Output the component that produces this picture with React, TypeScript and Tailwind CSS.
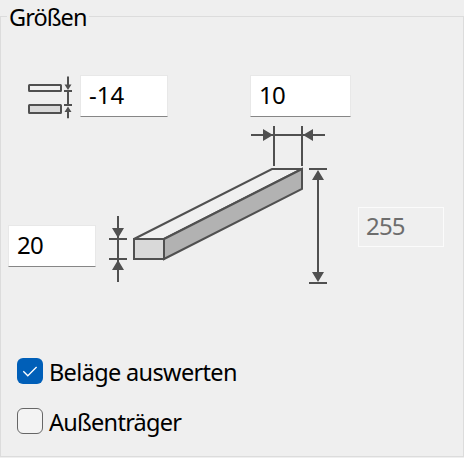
import React, { useState } from 'react';
import clsx from 'clsx';

interface SizeFieldProps {
  label: string;
  value: string;
  onChange?: (value: string) => void;
  disabled?: boolean;
  className?: string;
}

const SizeField = ({ label, value, onChange, disabled, className }: SizeFieldProps) => (
  <input
    type="text"
    aria-label={label}
    value={value}
    disabled={disabled}
    onChange={(e) => onChange?.(e.target.value)}
    className={clsx(
      'block shrink-0 border pb-[3px] outline-none',
      disabled
        ? 'h-10 w-[86px] border-[#fbfbfb] bg-[#efefef] pl-[7px] tracking-[-0.8px] text-[#6d6d6d]'
        : 'h-[42px] border-[#e8e8e8] border-b-[#868686] bg-white pl-2 text-black',
      className
    )}
  />
);

interface CheckOptionProps {
  label: string;
  checked: boolean;
  onChange: (checked: boolean) => void;
  textClassName?: string;
}

const CheckOption = ({ label, checked, onChange, textClassName }: CheckOptionProps) => (
  <label className="flex h-[26px] items-center">
    <input
      type="checkbox"
      className="sr-only"
      checked={checked}
      onChange={(e) => onChange(e.target.checked)}
    />
    <span
      className={clsx(
        'flex size-[26px] shrink-0 items-center justify-center rounded-[6px]',
        checked ? 'bg-[#005fb8]' : 'border border-[#666666] bg-[#f3f3f3]'
      )}
    >
      {checked && (
        <svg width="26" height="26" viewBox="0 0 26 26" fill="none" stroke="#fff" strokeWidth="1.3">
          <path d="M6.3 13.3 10.8 17.8 19.6 9" />
        </svg>
      )}
    </span>
    <span className={clsx('ml-[6px] whitespace-nowrap pt-[2px] text-[23.5px] leading-[26px]', textClassName)}>
      {label}
    </span>
  </label>
);

const GapIcon = () => (
  <svg width="46" height="44" viewBox="28 76 46 44" className="shrink-0" stroke="#505050" strokeWidth="2">
    <rect x="29" y="85" width="32" height="6" rx="0.5" fill="#f0f0f0" />
    <rect x="29" y="105" width="32" height="8" rx="0.5" fill="#d9d9d9" />
    <path d="M68 76.5V86M64 91H72M68 91V105M64 105H72M68 111V118.3" fill="none" />
    <path d="M64.5 84.5H71.5L68 90ZM64.5 112H71.5L68 106.5Z" fill="#505050" stroke="none" />
  </svg>
);

const BeamDiagram = () => (
  <svg width="220" height="160" viewBox="108 125 220 160" className="shrink-0" stroke="#505050" strokeWidth="2">
    {/* beam */}
    <path d="M134 239 272 169H302L164 239Z" fill="#f0f0f0" />
    <path d="M164 239 302 169V189L164 259Z" fill="#b2b2b2" />
    <path d="M134 239H164V259H134Z" fill="#d9d9d9" />
    {/* width */}
    <path d="M274 126V166M302 126V166M251 135H325" fill="none" />
    <path d="M263 129V141L273 135ZM313 129V141L303 135Z" fill="#505050" stroke="none" />
    {/* height */}
    <path d="M118 216V282M109 239H127M109 259H127" fill="none" />
    <path d="M112 228H124L118 238ZM112 270H124L118 260Z" fill="#505050" stroke="none" />
    {/* drop */}
    <path d="M309 169H327M318 172V280M309 283H327" fill="none" />
    <path d="M312 180H324L318 170ZM312 272H324L318 282Z" fill="#505050" stroke="none" />
  </svg>
);

const App = () => {
  const [gap, setGap] = useState('-14');
  const [width, setWidth] = useState('10');
  const [height, setHeight] = useState('20');
  const [evaluateDecking, setEvaluateDecking] = useState(true);
  const [outerBeam, setOuterBeam] = useState(false);

  return (
    <div className="flex h-[458px] w-[464px] flex-col overflow-hidden bg-[#efefef] pb-px font-['Noto_Sans','Open_Sans',sans-serif] text-[24px] text-black">
      <div className="flex h-[33px] shrink-0">
        <span className="mt-4 w-[7px] border-t border-l border-[#dcdcdc]" />
        <h1 className="w-[82px] whitespace-nowrap pl-[2px] text-[23.5px] leading-[35px] tracking-[-0.95px]">Größen</h1>
        <span className="mt-4 flex-1 border-t border-r border-[#dcdcdc]" />
      </div>

      <div className="flex flex-1 flex-col border-x border-b border-[#dcdcdc]">
        <div className="mt-[42px] flex items-start pl-[27px]">
          <div className="mt-px">
            <GapIcon />
          </div>
          <SizeField label="Abstand" value={gap} onChange={setGap} className="ml-[6px] w-[88px] tracking-[0px]" />
          <SizeField label="Breite" value={width} onChange={setWidth} className="ml-[82px] w-[101px] tracking-[-0.8px]" />
        </div>

        <div className="mt-[5px] flex items-start pl-[7px]">
          <SizeField label="Höhe" value={height} onChange={setHeight} className="mt-[100px] w-[88px] tracking-[-0.8px]" />
          <div className="ml-3">
            <BeamDiagram />
          </div>
          <SizeField label="Gefälle" value="255" disabled className="mt-[82px] ml-[30px]" />
        </div>

        <div className="mt-[73px] flex flex-col gap-6 pl-4">
          <CheckOption
            label="Beläge auswerten"
            checked={evaluateDecking}
            onChange={setEvaluateDecking}
            textClassName="tracking-[-0.65px]"
          />
          <CheckOption
            label="Außenträger"
            checked={outerBeam}
            onChange={setOuterBeam}
            textClassName="tracking-[-0.75px]"
          />
        </div>
      </div>
    </div>
  );
};

export default App;
